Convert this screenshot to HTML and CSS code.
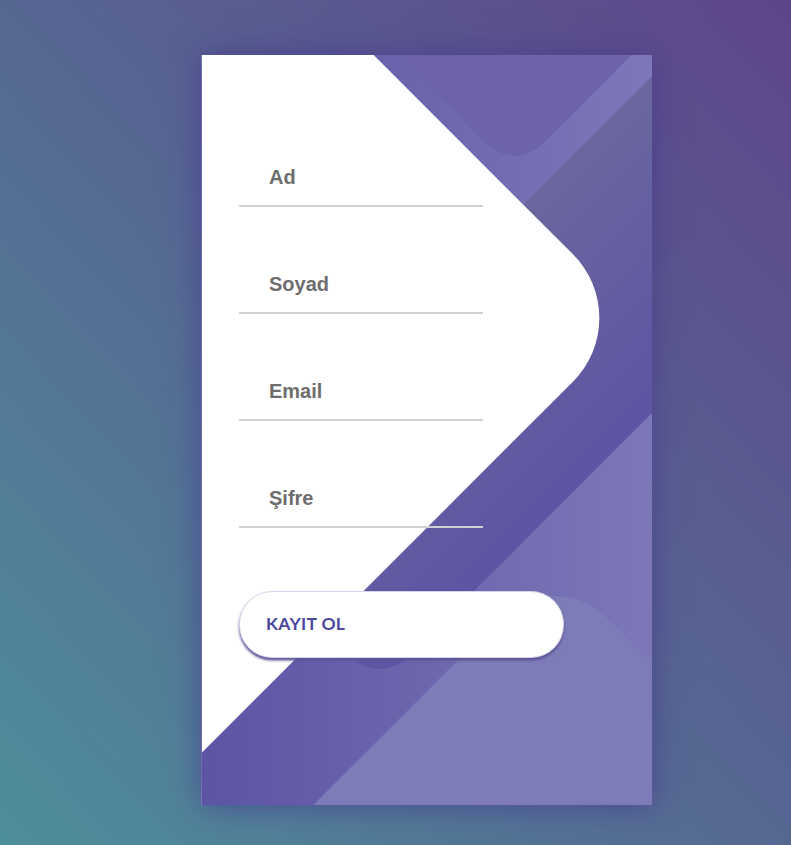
FILE: index.html
```html
<!DOCTYPE html>
<html lang="tr">
<head>
<meta charset="utf-8">
<title>Kayıt Ol</title>
<link rel="stylesheet" href="styles.css">
</head>
<body>
<div class="container">
  <div class="screen">
    <div class="screen__background">
      <span class="shape shape4"></span>
      <span class="shape shape3"></span>
      <span class="shape shape2"></span>
      <span class="shape shape1"></span>
    </div>
    <form class="login">
      <div class="field"><input class="input" type="text" placeholder="Ad"></div>
      <div class="field"><input class="input" type="text" placeholder="Soyad"></div>
      <div class="field"><input class="input" type="text" placeholder="Email"></div>
      <div class="field"><input class="input" type="password" placeholder="Şifre"></div>
      <button class="submit" type="button">Kayıt Ol</button>
    </form>
  </div>
</div>
</body>
</html>
```
FILE: styles.css
```css
* { box-sizing: border-box; }
html, body { margin: 0; padding: 0; }
body {
  height: 845px;
  overflow: hidden;
  background: linear-gradient(to top right, #4e8e9b 0%, #566792 50%, #5f458a 100%);
  font-family: "Liberation Sans", Arial, sans-serif;
}
.container {
  padding: 55px 0 0 202px;
}
.screen {
  position: relative;
  width: 450px;
  height: 750px;
  background: linear-gradient(90deg, #5D54A4, #7C78B8);
  box-shadow: 0 0 30px rgba(70, 55, 140, 0.75), -1px 0 0 #8a87c6;
}
.screen__background {
  position: absolute;
  inset: 0;
  overflow: hidden;
  z-index: 0;
}
.shape {
  position: absolute;
  transform: rotate(45deg);
}
.shape1 {
  width: 650px;
  height: 650px;
  background: #fff;
  top: -62.5px;
  right: 150px;
  border-radius: 0 90px 0 0;
}
.shape2 {
  width: 275px;
  height: 275px;
  background: #6C63AC;
  top: -215px;
  right: 0;
  border-radius: 40px;
}
.shape3 {
  width: 237.5px;
  height: 675px;
  background: linear-gradient(270deg, #5D54A4, #6A679E);
  top: -30px;
  right: 0;
  border-radius: 40px;
}
.shape4 {
  width: 250px;
  height: 500px;
  background: #7E7BB9;
  top: 525px;
  right: 62.5px;
  border-radius: 75px;
}
.login {
  position: relative;
  z-index: 1;
  width: 400px;
  padding: 70px 37px 0;
  display: flex;
  flex-direction: column;
}
.field {
  padding: 25px 0;
}
.input {
  display: block;
  width: 244px;
  height: 57px;
  border: none;
  border-bottom: 2px solid #D1D1D4;
  background: none;
  padding: 0 12px 0 30px;
  font-family: "Liberation Sans", Arial, sans-serif;
  font-size: 20px;
  font-weight: 700;
  color: #6b6b6b;
  outline: none;
}
.input::placeholder {
  color: #6e6d6d;
  opacity: 1;
}
.submit {
  margin-top: 38px;
  width: 325px;
  display: flex;
  align-items: center;
  background: #fff;
  border: 1px solid #D4D3E8;
  border-radius: 33px;
  padding: 20px 25px 22px 26px;
  font-family: Lato, "Open Sans", sans-serif;
  font-size: 17.5px;
  line-height: 23px;
  font-weight: 700;
  letter-spacing: 0.3px;
  text-transform: uppercase;
  color: #4C489D;
  box-shadow: 0 2.5px 2.5px #5C5696;
  cursor: pointer;
}
```
